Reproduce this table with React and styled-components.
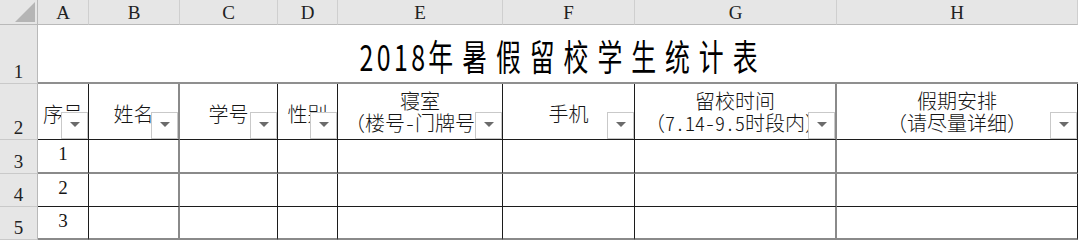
import React from "react";
import styled, { createGlobalStyle } from "styled-components";

const GlobalStyle = createGlobalStyle`
  html, body {
    margin: 0;
    padding: 0;
    background: #ffffff;
    overflow: hidden;
  }
`;

const DARK = "1px solid #1c1c1c";
const SOFT = "2px solid #8a8a8a";

const columns = [
  { key: "A", width: 51, rule: DARK, head: ["序号"] },
  { key: "B", width: 91, rule: SOFT, head: ["姓名"] },
  { key: "C", width: 98, rule: DARK, head: ["学号"] },
  { key: "D", width: 60, rule: DARK, head: ["性别"] },
  { key: "E", width: 165, rule: DARK, head: ["寝室", "（楼号-门牌号）"] },
  { key: "F", width: 132, rule: DARK, head: ["手机"] },
  { key: "G", width: 202, rule: SOFT, head: ["留校时间", "（7.14-9.5时段内）"] },
  { key: "H", width: 241, rule: DARK, head: ["假期安排", "（请尽量详细）"] },
];

const bodyRows = [
  { num: 3, value: "1", height: 34, rule: SOFT },
  { num: 4, value: "2", height: 33, rule: DARK },
  { num: 5, value: "3", height: 33, rule: SOFT },
];

const Sheet = styled.div`
  position: relative;
  display: grid;
  grid-template-columns: 38px ${columns.map((c) => `${c.width}px`).join(" ")};
  grid-template-rows: 25px 59px 56px ${bodyRows.map((r) => `${r.height}px`).join(" ")};
  width: 1078px;
`;

const Corner = styled.div`
  box-sizing: border-box;
  background: #e6e6e6;
  border-right: 1px solid #b9b9b9;
  border-bottom: 1px solid #b9b9b9;
  display: flex;
  align-items: flex-end;
  justify-content: flex-end;
  padding: 0 2px 2px 0;
`;

const ColHeader = styled.div`
  box-sizing: border-box;
  background: #e6e6e6;
  border-right: 1px solid #cfcfcf;
  border-bottom: 1px solid #b9b9b9;
  display: flex;
  align-items: center;
  justify-content: center;
  font-family: "Liberation Serif", serif;
  font-size: 19px;
  color: #222;
  padding-top: 2px;
`;

const RowHeader = styled.div`
  box-sizing: border-box;
  background: #e6e6e6;
  border-right: 1px solid #b9b9b9;
  border-bottom: 1px solid #c9c9c9;
  display: flex;
  align-items: flex-end;
  justify-content: center;
  font-family: "Liberation Serif", serif;
  font-size: 19px;
  line-height: 19px;
  color: #222;
  padding-bottom: 2px;
`;

const TitleCell = styled.div`
  grid-column: span 8;
  box-sizing: border-box;
  border-bottom: 2px solid #8f8f8f;
  display: flex;
  align-items: center;
  justify-content: center;
  padding-top: 3px;
`;

const Title = styled.h1`
  margin: 0;
  display: inline-block;
  transform: scaleX(0.69);
  font-family: "Noto Sans CJK SC", sans-serif;
  font-size: 36px;
  font-weight: 400;
  line-height: 40px;
  color: #000;
  white-space: nowrap;
`;

const Year = styled.span`
  letter-spacing: 5px;
`;

const Spaced = styled.span`
  letter-spacing: 13px;
  margin-right: -13px;
`;

const HeadCell = styled.div`
  position: relative;
  box-sizing: border-box;
  border-right: ${(p) => p.$rule};
  border-bottom: ${DARK};
  display: flex;
  flex-direction: column;
  align-items: center;
  justify-content: center;
  overflow: hidden;
  font-family: "Noto Sans CJK SC", sans-serif;
  font-weight: 300;
  font-size: 20px;
  color: #151515;
  padding-top: ${(p) => (p.$lines > 1 ? "1px" : "4px")};
  white-space: nowrap;
`;

const HeadText = styled.div`
  height: 22px;
  line-height: 22px;
`;

/* half-width digits, as the sheet's CJK font sets them */
const Latin = styled.span`
  font-feature-settings: "hwid";
`;

const FilterButton = styled.div`
  position: absolute;
  right: 0;
  bottom: 0;
  width: 27px;
  height: 27px;
  box-sizing: border-box;
  background: #ffffff;
  border: 1px solid #c9c9c9;
  display: flex;
  align-items: center;
  justify-content: center;
  padding-bottom: 3px;
`;

const DataCell = styled.div`
  box-sizing: border-box;
  border-right: ${(p) => p.$col};
  border-bottom: ${(p) => p.$row};
  display: flex;
  align-items: center;
  justify-content: center;
  font-family: "Liberation Serif", serif;
  font-size: 19px;
  color: #151515;
  padding-bottom: 4px;
`;

const FillHandle = styled.div`
  position: absolute;
  left: 180px;
  top: 240px;
  width: 8px;
  height: 4px;
  background: #217346;
`;

function CornerMark() {
  return (
    <svg width="20" height="20" viewBox="0 0 20 20">
      <polygon points="20,0 20,20 0,20" fill="#b5b5b5" />
    </svg>
  );
}

function Filter() {
  return (
    <FilterButton>
      <svg width="10" height="5" viewBox="0 0 10 5">
        <polygon points="0,0 10,0 5,5" fill="#6b6b6b" />
      </svg>
    </FilterButton>
  );
}

function HeadLine({ text }) {
  const parts = text.split(/([0-9.\-]+)/);
  return (
    <HeadText>
      {parts.map((part, i) =>
        i % 2 === 1 ? <Latin key={i}>{part}</Latin> : part
      )}
    </HeadText>
  );
}

export default function App() {
  return (
    <>
      <GlobalStyle />
      <Sheet>
        <Corner>
          <CornerMark />
        </Corner>
        {columns.map((c) => (
          <ColHeader key={c.key}>{c.key}</ColHeader>
        ))}

        <RowHeader>1</RowHeader>
        <TitleCell>
          <Title>
            <Year>2018</Year>
            <Spaced>年暑假留校学生统计表</Spaced>
          </Title>
        </TitleCell>

        <RowHeader>2</RowHeader>
        {columns.map((c) => (
          <HeadCell key={c.key} $rule={c.rule} $lines={c.head.length}>
            {c.head.map((line) => (
              <HeadLine key={line} text={line} />
            ))}
            <Filter />
          </HeadCell>
        ))}

        {bodyRows.map((r) => (
          <React.Fragment key={r.num}>
            <RowHeader>{r.num}</RowHeader>
            {columns.map((c, i) => (
              <DataCell key={c.key} $col={c.rule} $row={r.rule}>
                {i === 0 ? r.value : null}
              </DataCell>
            ))}
          </React.Fragment>
        ))}
        <FillHandle />
      </Sheet>
    </>
  );
}
